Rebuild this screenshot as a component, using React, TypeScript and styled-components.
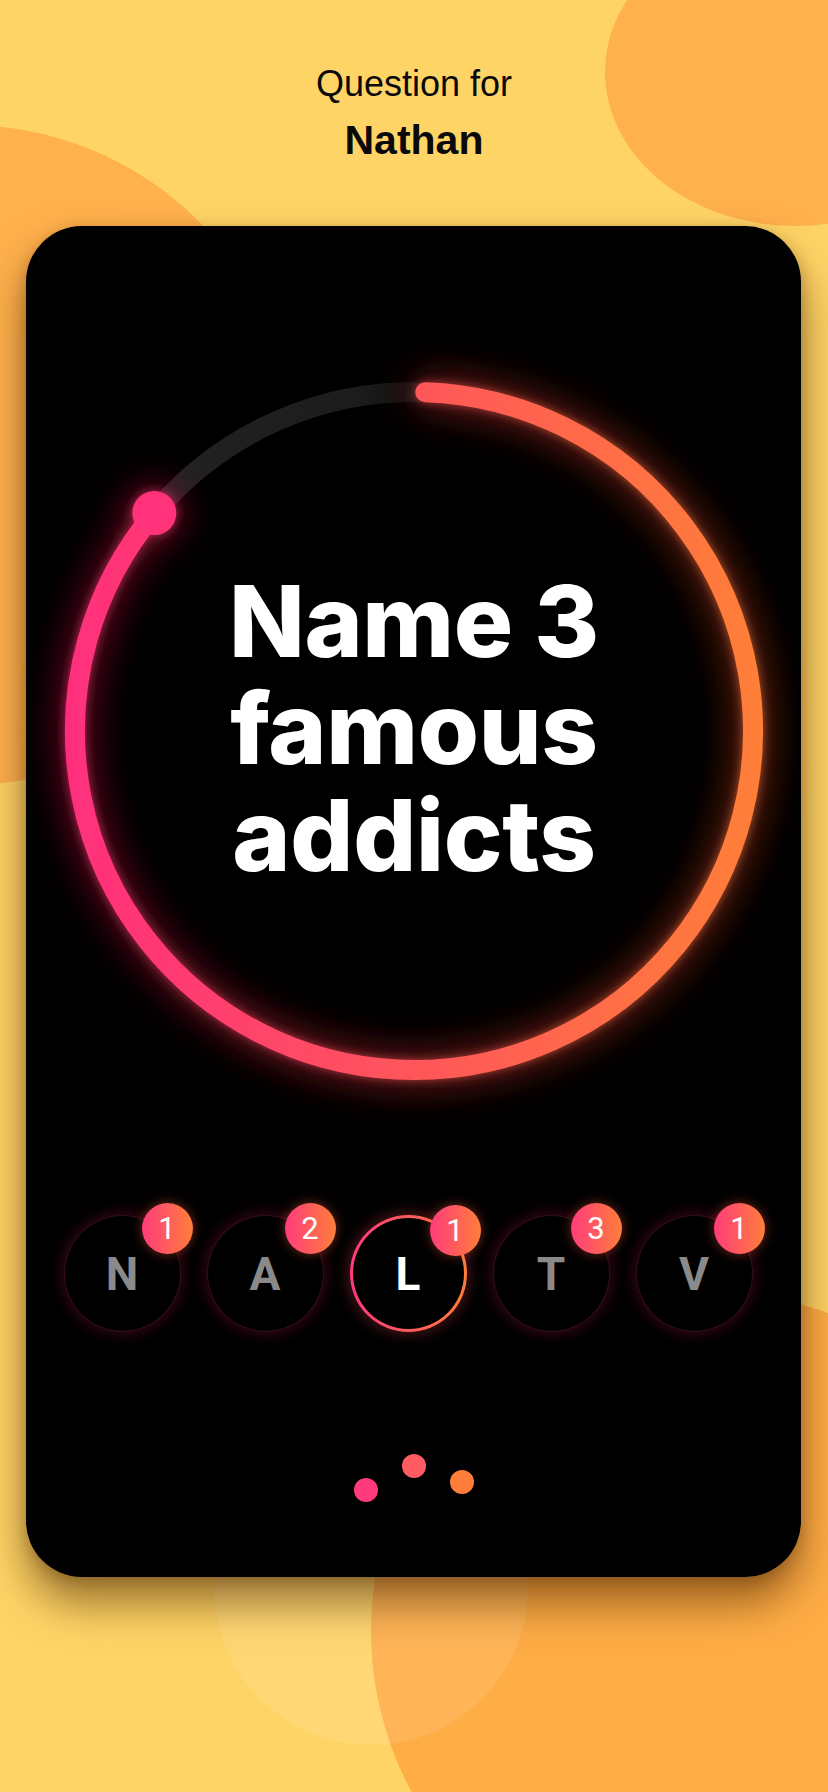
import React from "react";
import styled, { createGlobalStyle } from "styled-components";

const GlobalStyle = createGlobalStyle`
  html, body {
    margin: 0;
    padding: 0;
    background: #ffd466;
  }
  #root {
    width: 828px;
    height: 1792px;
  }
`;

const Screen = styled.div`
  position: relative;
  width: 828px;
  height: 1792px;
  overflow: hidden;
  background: #ffd466;
  font-family: "Liberation Sans", Arial, sans-serif;
`;

// decorative background blobs, behind everything
const Blob = styled.div<{ $x: number; $y: number; $rx: number; $ry: number; $color: string }>`
  position: absolute;
  left: ${(p) => p.$x - p.$rx}px;
  top: ${(p) => p.$y - p.$ry}px;
  width: ${(p) => p.$rx * 2}px;
  height: ${(p) => p.$ry * 2}px;
  border-radius: 50%;
  background: ${(p) => p.$color};
`;

const Content = styled.div`
  position: relative;
  display: flex;
  flex-direction: column;
  align-items: stretch;
  padding-top: 62px;
`;

const Header = styled.header`
  display: flex;
  flex-direction: column;
  align-items: center;
  color: #0a0a0a;
`;

const Subtitle = styled.div`
  font-size: 36px;
  line-height: 44px;
  font-weight: 400;
`;

const PlayerName = styled.div`
  margin-top: 10px;
  font-size: 41px;
  line-height: 48px;
  font-weight: 700;
`;

const Card = styled.main`
  margin: 62px 0 0 26px;
  width: 775px;
  height: 1351px;
  border-radius: 56px;
  background: #000;
  box-shadow: 0 26px 44px rgba(70, 35, 0, 0.55), 0 4px 14px rgba(70, 35, 0, 0.25);
  display: flex;
  flex-direction: column;
  align-items: center;
  padding-top: 135px;
  box-sizing: border-box;
`;

const RingWrap = styled.div`
  position: relative;
  width: 740px;
  height: 740px;
  margin-left: 1px;
`;

const RingSvg = styled.svg`
  display: block;
  overflow: visible;
`;

const QuestionText = styled.h1`
  position: absolute;
  inset: 0;
  margin: 0;
  display: flex;
  flex-direction: column;
  align-items: center;
  justify-content: center;
  color: #fff;
  font-family: Inter, "Noto Sans", sans-serif;
  font-weight: 800;
  font-size: 99px;
  line-height: 107px;
  letter-spacing: -0.3px;
  text-align: center;
  padding-bottom: 6px;
`;

const Players = styled.div`
  margin-top: 114px;
  display: flex;
  gap: 26px;
  padding-right: 11px;
`;

const Avatar = styled.div<{ $active?: boolean }>`
  position: relative;
  width: 117px;
  height: 117px;
  box-sizing: border-box;
  border-radius: 50%;
  display: flex;
  align-items: center;
  justify-content: center;
  font-family: Roboto, "Liberation Sans", sans-serif;
  font-weight: 700;
  font-size: 46px;
  color: ${(p) => (p.$active ? "#ffffff" : "#8a8a8a")};
  border: ${(p) => (p.$active ? "3.5px" : "1.5px")} solid transparent;
  background: ${(p) =>
    p.$active
      ? "linear-gradient(#000, #000) padding-box, linear-gradient(90deg, #ff3a7d, #ff7d3a) border-box"
      : "linear-gradient(#000, #000) padding-box, linear-gradient(90deg, #3a0b20, #361018) border-box"};
  box-shadow: ${(p) =>
    p.$active
      ? "0 0 16px rgba(255, 70, 90, 0.4)"
      : "0 0 14px 3px rgba(190, 25, 80, 0.26)"};
`;

const Badge = styled.span`
  position: absolute;
  top: -13px;
  left: 77px;
  width: 51px;
  height: 51px;
  border-radius: 50%;
  background: linear-gradient(90deg, #ff3c7c, #ff7e3a);
  box-shadow: 0 0 12px rgba(255, 90, 60, 0.45);
  display: flex;
  align-items: center;
  justify-content: center;
  color: #fff;
  font-family: Roboto, "Liberation Sans", sans-serif;
  font-weight: 400;
  font-size: 31px;
`;

const Dots = styled.div`
  margin-top: 122px;
  display: flex;
  align-items: flex-start;
  gap: 24px;
  height: 48px;
`;

const Dot = styled.span<{ $color: string; $offset: number }>`
  width: 24px;
  height: 24px;
  border-radius: 50%;
  background: ${(p) => p.$color};
  margin-top: ${(p) => p.$offset}px;
`;

const players = [
  { letter: "N", count: 1 },
  { letter: "A", count: 2 },
  { letter: "L", count: 1, active: true },
  { letter: "T", count: 3 },
  { letter: "V", count: 1 },
];

const dots = [
  { color: "#ff3a7e", offset: 24 },
  { color: "#ff5b62", offset: 0 },
  { color: "#ff7c3a", offset: 16 },
];

// ring geometry, svg box 740x740, circle centre 370,370
const R = 339;
const C = 370;
const point = (deg: number) => {
  const a = (deg * Math.PI) / 180;
  return { x: C + R * Math.sin(a), y: C - R * Math.cos(a) };
};
const START = 1.9;
const END = 310;

function TimerRing() {
  const s = point(START);
  const e = point(END);
  const progress = `M ${s.x} ${s.y} A ${R} ${R} 0 1 1 ${e.x} ${e.y}`;
  const track = `M ${e.x} ${e.y} A ${R} ${R} 0 0 1 ${s.x} ${s.y}`;

  return (
    <RingSvg width={740} height={740} viewBox="0 0 740 740">
      <defs>
        <linearGradient id="arcGrad" gradientUnits="userSpaceOnUse" x1="21" y1="0" x2="719" y2="0">
          <stop offset="0" stopColor="#ff2e7d" />
          <stop offset="0.5" stopColor="#ff565a" />
          <stop offset="1" stopColor="#ff7f38" />
        </linearGradient>
        <linearGradient id="trackGrad" gradientUnits="userSpaceOnUse" x1={e.x} y1="0" x2={s.x} y2="0">
          <stop offset="0" stopColor="#222222" />
          <stop offset="0.75" stopColor="#1c1c1c" />
          <stop offset="1" stopColor="#0c0c0c" />
        </linearGradient>
        <filter id="glow" x="-20%" y="-20%" width="140%" height="140%">
          <feGaussianBlur in="SourceGraphic" stdDeviation="20" result="wide" />
          <feColorMatrix
            in="wide"
            type="matrix"
            values="1 0 0 0 0  0 0.35 0 0 0  0 0 0.35 0 0  0 0 0 0.7 0"
            result="wideRed"
          />
          <feGaussianBlur in="SourceGraphic" stdDeviation="5" result="near" />
          <feComponentTransfer in="near" result="nearDim">
            <feFuncA type="linear" slope="0.6" />
          </feComponentTransfer>
          <feMerge>
            <feMergeNode in="wideRed" />
            <feMergeNode in="nearDim" />
            <feMergeNode in="SourceGraphic" />
          </feMerge>
        </filter>
      </defs>
      <path d={track} fill="none" stroke="url(#trackGrad)" strokeWidth={20} />
      <g filter="url(#glow)">
        <path d={progress} fill="none" stroke="url(#arcGrad)" strokeWidth={20} strokeLinecap="round" />
        <circle cx={e.x} cy={e.y} r={22} fill="#ff337a" />
      </g>
    </RingSvg>
  );
}

export default function App() {
  return (
    <>
      <GlobalStyle />
      <Screen>
        <Blob $x={-34} $y={455} $rx={330} $ry={330} $color="#ffb14c" />
        <Blob $x={795} $y={72} $rx={190} $ry={154} $color="#ffb14c" />
        <Blob $x={710} $y={1631} $rx={339} $ry={339} $color="#ffad45" />
        <Blob $x={371} $y={1588} $rx={157} $ry={157} $color="rgba(255, 255, 255, 0.1)" />

        <Content>
          <Header>
            <Subtitle>Question for</Subtitle>
            <PlayerName>Nathan</PlayerName>
          </Header>

          <Card>
            <RingWrap>
              <TimerRing />
              <QuestionText>
                <span>Name 3</span>
                <span>famous</span>
                <span>addicts</span>
              </QuestionText>
            </RingWrap>

            <Players>
              {players.map((p) => (
                <Avatar key={p.letter} $active={p.active}>
                  {p.letter}
                  <Badge>{p.count}</Badge>
                </Avatar>
              ))}
            </Players>

            <Dots>
              {dots.map((d, i) => (
                <Dot key={i} $color={d.color} $offset={d.offset} />
              ))}
            </Dots>
          </Card>
        </Content>
      </Screen>
    </>
  );
}
